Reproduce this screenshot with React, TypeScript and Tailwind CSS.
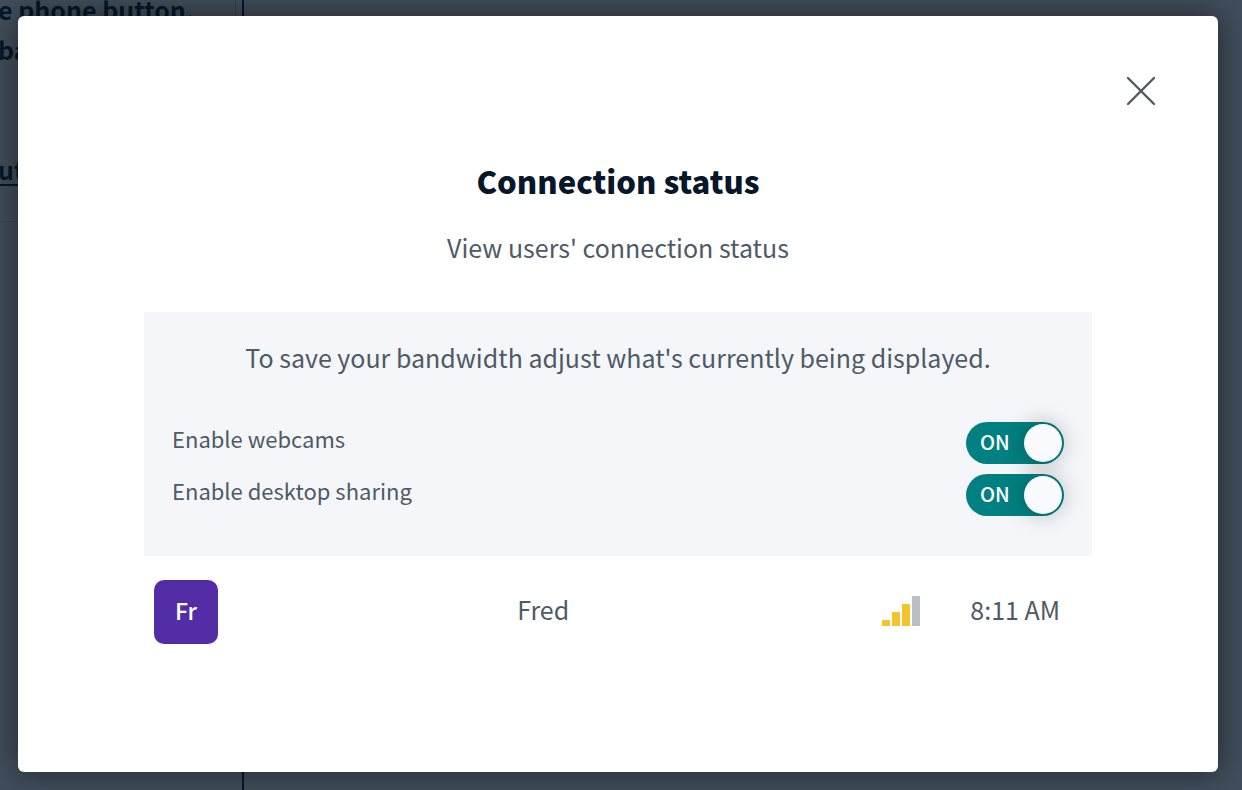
import { useId, useState } from "react";

function Toggle({ label }: { label: string }) {
  const id = useId();
  const [on, setOn] = useState(true);
  return (
    <div className="flex h-[52px] items-start justify-between">
      <label htmlFor={id} className="text-[22px] leading-8 text-[#4e5a66]">
        {label}
      </label>
      <span className="relative flex h-[42px] w-[98px] items-center rounded-full bg-[#008081] p-0.5">
        <input
          id={id}
          type="checkbox"
          role="switch"
          checked={on}
          onChange={() => setOn(!on)}
          className="absolute inset-0 z-10 m-0 size-full cursor-pointer opacity-0"
        />
        <span aria-hidden="true" className={on ? "flex-1 pb-0.5 pl-3 text-[20px] leading-8 font-medium text-white" : "order-2 flex-1 pb-0.5 pl-1 text-[20px] leading-8 font-medium text-white"}>
          {on ? "ON" : "OFF"}
        </span>
        <span className="size-[38px] rounded-full bg-[#fafbfe] shadow-[0_0_20px_4px_rgba(0,0,0,0.18)]" />
      </span>
    </div>
  );
}

function Signal() {
  return (
    <svg width="38" height="30" viewBox="0 0 38 30" role="img" aria-label="Connection quality" shapeRendering="crispEdges" className="block">
      <rect x="0" y="24" width="8" height="6" fill="#f2c42e" />
      <rect x="10" y="16" width="8" height="14" fill="#f2c42e" />
      <rect x="20" y="8" width="8" height="22" fill="#f2c42e" />
      <rect x="30" y="0" width="8" height="30" fill="#babfc4" />
    </svg>
  );
}

function ChatBackdrop() {
  return (
    <div aria-hidden="true" className="absolute inset-0 overflow-hidden bg-[#414d5b] text-[25px] font-bold text-[#061729]">
      <div className="h-full w-[244px] border-r-2 border-[#061729]">
        <div className="h-[222px] w-[236px] border-r border-b border-[#36424f] -indent-0.5 whitespace-nowrap">
          <p className="h-[29px] leading-[18px]">e phone button.</p>
          <p className="h-[120px] leading-10">ba</p>
          <p className="leading-10 underline underline-offset-4">utton</p>
        </div>
      </div>
    </div>
  );
}

export default function App() {
  const [open, setOpen] = useState(true);
  return (
    <div className="relative flex min-h-screen overflow-hidden pt-4 pr-6 pb-[18px] pl-[18px] font-['Noto_Sans_CJK_SC',sans-serif]">
      <ChatBackdrop />
      {open && (
        <main
          role="dialog"
          aria-labelledby="status-title"
          className="relative flex flex-1 flex-col rounded-md bg-white px-[126px] pt-[143px] text-[#4e5a66] shadow-[0_0_30px_rgba(0,0,0,0.5)]"
        >
          <button
            type="button"
            aria-label="Close"
            onClick={() => setOpen(false)}
            className="absolute top-[55px] right-[57px] flex size-10 items-center justify-center"
          >
            <svg width="30" height="30" viewBox="0 0 30 30" fill="none" stroke="#4e5a66" strokeWidth="2.4" strokeLinecap="round">
              <path d="M2 2 28 28M28 2 2 28" />
            </svg>
          </button>
          <h1 id="status-title" className="text-center text-[31px] leading-[44px] font-black text-[#061729]">
            Connection status
          </h1>
          <p className="mt-6 text-center text-[25px] leading-10">View users' connection status</p>
          <section className="mt-[45px] h-[244px] bg-[#f4f6fa] px-7 pt-[25px]">
            <p className="mb-[45px] text-center text-[25px] leading-10">
              To save your bandwidth adjust what's currently being displayed.
            </p>
            <Toggle label="Enable webcams" />
            <Toggle label="Enable desktop sharing" />
          </section>
          <ul>
            <li className="flex items-center pt-6 pr-8 pl-2.5 text-[25px] leading-10">
              <span className="flex size-16 items-center justify-center rounded-[10px] bg-[#522da5] pb-1 text-[23px] font-medium text-white">
                Fr
              </span>
              <span className="flex-1 pb-1.5 text-center">Fred</span>
              <span className="mr-[50px] ml-3.5 pb-0.5">
                <Signal />
              </span>
              <time className="pb-1.5">8:11 AM</time>
            </li>
          </ul>
        </main>
      )}
    </div>
  );
}
